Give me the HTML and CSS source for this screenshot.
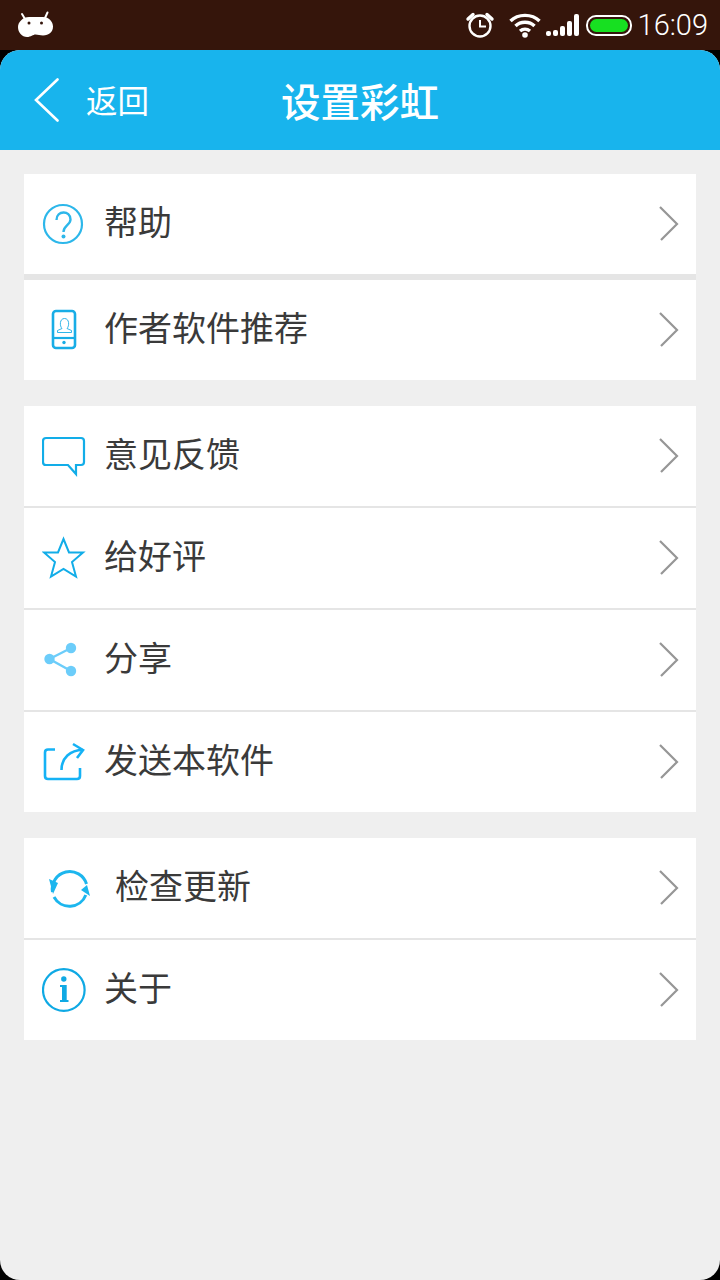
FILE: index.html
```html
<!DOCTYPE html>
<html lang="zh-CN">
<head>
    <meta charset="UTF-8">
    <meta name="viewport" content="width=device-width, initial-scale=1.0">
    <title>设置彩虹</title>
    <link rel="stylesheet" href="styles.css">
</head>
<body>
    <div class="status-bar">
        <svg class="status-logo" width="36" height="26" viewBox="0 0 36 26">
            <path d="M4 3 L7 8 M29.500 1.500 L27 7" stroke="#fff" stroke-width="2" stroke-linecap="round"/>
            <path d="M11 6 H25 C31 6 35 11 35 15.500 C35 21 31 24.500 25 24.500 C22 24.500 20 23.500 17.500 23.500 C15 23.500 13 26 9 26 C4 26 0 21.500 0 16 C0 11 5 6 11 6 Z" fill="#fff"/>
            <circle cx="11" cy="12" r="1.500" fill="#35150b"/>
            <circle cx="23.500" cy="12" r="1.500" fill="#35150b"/>
        </svg>
        <div class="status-right">
            <svg width="30" height="26" viewBox="0 0 30 26" fill="none" stroke="#fff">
                <circle cx="15" cy="14" r="10.500" stroke-width="2.400"/>
                <path d="M15 8 V14.500 H21" stroke-width="2"/>
                <path d="M3 7 L8 2.500 M27 7 L22 2.500" stroke-width="3.400" stroke-linecap="round"/>
            </svg>
            <svg class="status-wifi" width="32" height="26" viewBox="0 0 32 26" fill="none" stroke="#fff" stroke-width="3.400">
                <path d="M1.500 9 C9 1.500 23 1.500 30.500 9"/>
                <path d="M6.500 14 C11.500 9 20.500 9 25.500 14"/>
                <path d="M11 19 C14 16.500 18 16.500 21 19"/>
                <circle cx="16" cy="23" r="2.800" fill="#fff" stroke="none"/>
            </svg>
            <div class="status-signal">
                <i class="bar-1"></i><i class="bar-2"></i><i class="bar-3"></i><i class="bar-4"></i><i class="bar-5"></i>
            </div>
            <div class="status-battery"><span></span></div>
            <span class="status-time">16:09</span>
        </div>
    </div>

    <div class="app">
        <header class="title-bar">
            <div class="back">
                <svg width="26" height="44" viewBox="0 0 26 44" fill="none" stroke="#fff" stroke-width="2.600" stroke-linecap="round">
                    <path d="M23.500 1.500 L2 22 L23.500 42.500"/>
                </svg>
                <span>返回</span>
            </div>
            <h1>设置彩虹</h1>
        </header>

        <main class="content">
            <section class="group group-thick">
                <div class="row">
                    <svg class="icon" width="44" height="44" viewBox="0 0 44 44" fill="none" stroke="#2db7ea">
                        <circle cx="21" cy="22" r="19" stroke-width="2.200"/>
                        <path d="M14.500 18 C14.500 8 28.500 8 28.500 17.500 C28.500 23 21.500 23.500 21.500 30" stroke-width="2.400"/>
                        <circle cx="21.500" cy="34.500" r="2" fill="#2db7ea" stroke="none"/>
                    </svg>
                    <span class="label">帮助</span>
                    <svg class="chevron" width="20" height="36" viewBox="0 0 20 36"><path d="M1 1 L18 18 L2 34"/></svg>
                </div>
                <div class="row">
                    <svg class="icon" width="44" height="44" viewBox="0 0 44 44" fill="none" stroke="#18ade6">
                        <rect x="11" y="3" width="22" height="37" rx="3" stroke-width="2.600"/>
                        <path d="M11 30 H33" stroke-width="2.200"/>
                        <circle cx="22" cy="34.500" r="1.700" fill="#18ade6" stroke="none"/>
                        <path d="M15.500 24.500 V22.500 L20 20.500 C17.500 18 17.500 10.500 22.500 10.500 C27.500 10.500 27.500 18 25 20.500 L29.500 22.500 V24.500 Z" stroke-width="0.900"/>
                    </svg>
                    <span class="label">作者软件推荐</span>
                    <svg class="chevron" width="20" height="36" viewBox="0 0 20 36"><path d="M1 1 L18 18 L2 34"/></svg>
                </div>
            </section>

            <section class="group">
                <div class="row">
                    <svg class="icon" width="44" height="44" viewBox="0 0 44 44" fill="none" stroke="#12ade8" stroke-width="2.200">
                        <path d="M4 4 H39 Q42 4 42 7 V28 Q42 31 39 31 H34 V40 L26 31 H4 Q1 31 1 28 V7 Q1 4 4 4 Z"/>
                    </svg>
                    <span class="label">意见反馈</span>
                    <svg class="chevron" width="20" height="36" viewBox="0 0 20 36"><path d="M1 1 L18 18 L2 34"/></svg>
                </div>
                <div class="row">
                    <svg class="icon" width="44" height="44" viewBox="0 0 44 44" fill="none" stroke="#12ade8" stroke-width="2">
                        <path d="M21.500 3 L27 16.500 H41 L30 26 L34 40.500 L21.500 33 L9 40.500 L13 26 L2 16.500 H16 Z"/>
                    </svg>
                    <span class="label">给好评</span>
                    <svg class="chevron" width="20" height="36" viewBox="0 0 20 36"><path d="M1 1 L18 18 L2 34"/></svg>
                </div>
                <div class="row">
                    <svg class="icon" width="44" height="44" viewBox="0 0 44 44" fill="#6ccdfa" stroke="#6ccdfa">
                        <path d="M29 10 L7.500 21 L29 33" fill="none" stroke-width="2.400"/>
                        <circle cx="29" cy="10" r="5.200" stroke="none"/>
                        <circle cx="7.500" cy="21" r="5.200" stroke="none"/>
                        <circle cx="29" cy="33" r="5.200" stroke="none"/>
                    </svg>
                    <span class="label">分享</span>
                    <svg class="chevron" width="20" height="36" viewBox="0 0 20 36"><path d="M1 1 L18 18 L2 34"/></svg>
                </div>
                <div class="row">
                    <svg class="icon" width="44" height="44" viewBox="0 0 44 44" fill="none" stroke="#15b2f5" stroke-width="2.600">
                        <path d="M13 9.500 H6 Q3 9.500 3 12.500 V36 Q3 39 6 39 H35 Q38 39 38 36 V28"/>
                        <path d="M19.500 30 C19.500 18 28 10 41 10"/>
                        <path d="M31 4 L41 10 L35 18"/>
                    </svg>
                    <span class="label">发送本软件</span>
                    <svg class="chevron" width="20" height="36" viewBox="0 0 20 36"><path d="M1 1 L18 18 L2 34"/></svg>
                </div>
            </section>

            <section class="group">
                <div class="row">
                    <svg class="icon icon-refresh" width="44" height="44" viewBox="0 0 44 44" fill="none" stroke="#1cb6ee" stroke-width="3">
                        <path d="M5.500 26 A17.500 17.500 0 0 1 39.500 18"/>
                        <path d="M38.800 29 A17.500 17.500 0 0 1 7 31"/>
                        <path d="M2 13 L11 17 L6 28 Z" fill="#1cb6ee" stroke="none"/>
                        <path d="M34 24 L43 30 L40 19 Z" fill="#1cb6ee" stroke="none"/>
                    </svg>
                    <span class="label label-wide">检查更新</span>
                    <svg class="chevron" width="20" height="36" viewBox="0 0 20 36"><path d="M1 1 L18 18 L2 34"/></svg>
                </div>
                <div class="row">
                    <svg class="icon" width="44" height="44" viewBox="0 0 44 44" fill="none" stroke="#0fa9e4">
                        <circle cx="21.800" cy="22" r="20.800" stroke-width="2.200"/>
                        <circle cx="21.800" cy="11" r="2.700" fill="#0fa9e4" stroke="none"/>
                        <path d="M18 17 H24.700 V32 H26.500 V34 H18 V32 H20 V19 H18 Z" fill="#0fa9e4" stroke="none"/>
                    </svg>
                    <span class="label">关于</span>
                    <svg class="chevron" width="20" height="36" viewBox="0 0 20 36"><path d="M1 1 L18 18 L2 34"/></svg>
                </div>
            </section>
        </main>
    </div>
</body>
</html>
```

FILE: styles.css
```css
:root {
    --primary: #18b4ed;
    --page: #efefef;
    --line: #e5e5e5;
}
html, body {
    margin: 0;
    padding: 0;
}
body {
    width: 720px;
    height: 1280px;
    overflow: hidden;
    background: #000;
    font-family: "Noto Sans CJK SC", "Noto Sans", sans-serif;
}

/* status bar */
.status-bar {
    height: 50px;
    background: #35150b;
    display: flex;
    align-items: center;
    justify-content: space-between;
    padding: 0 12px 0 18px;
}
.status-logo {
    margin-top: -2px;
}
.status-right {
    display: flex;
    align-items: center;
}
.status-wifi {
    margin-left: 14px;
}
.status-signal {
    display: flex;
    align-items: flex-end;
    gap: 2px;
    height: 22px;
    margin-left: 5px;
}
.status-signal i {
    display: block;
    width: 5px;
    background: #fff;
    border-radius: 2px;
}
.status-signal .bar-1 { height: 5px; }
.status-signal .bar-2 { height: 6px; }
.status-signal .bar-3 { height: 10px; }
.status-signal .bar-4 { height: 15px; }
.status-signal .bar-5 { height: 22px; }
.status-battery {
    width: 46px;
    height: 21px;
    margin-left: 7px;
    box-sizing: border-box;
    border: 2px solid #fff;
    border-radius: 10px;
    padding: 2px;
}
.status-battery span {
    display: block;
    height: 100%;
    background: #17e021;
    border-radius: 7px;
}
.status-time {
    margin-left: 6px;
    color: #fff;
    font-family: Roboto, sans-serif;
    font-size: 29px;
    font-weight: 300;
    line-height: 50px;
}

/* main window */
.app {
    height: 1230px;
    background: var(--page);
    border-radius: 20px;
    overflow: hidden;
}
.title-bar {
    height: 100px;
    background: var(--primary);
    display: flex;
    align-items: center;
    justify-content: center;
    position: relative;
    color: #fff;
}
.title-bar h1 {
    margin: 0 0 2px;
    font-size: 39.500px;
    font-weight: 500;
}
.back {
    position: absolute;
    left: 34px;
    top: 26px;
    display: flex;
    align-items: center;
    gap: 26px;
    font-size: 31.500px;
}
.back span {
    margin-bottom: 2px;
}
.content {
    padding: 24px 24px 0;
}
.group {
    background: #fff;
    margin-bottom: 26px;
}
.row {
    height: 100px;
    display: flex;
    align-items: center;
    padding: 0 17px 0 18px;
}
.row + .row {
    margin-top: 2px;
    box-shadow: 0 -2px 0 var(--line);
}
.group-thick .row + .row {
    margin-top: 6px;
    box-shadow: 0 -6px 0 var(--line);
}
.icon {
    flex: none;
}
.icon-refresh {
    margin-left: 5px;
}
.label {
    flex: 1;
    margin: 0 0 7px 18px;
    color: #3a3a3a;
    font-size: 34px;
    font-weight: 400;
}
.label-wide {
    margin-left: 24px;
}
.chevron {
    flex: none;
    margin-top: -1px;
    fill: none;
    stroke: #969696;
    stroke-width: 2.200;
}
```
